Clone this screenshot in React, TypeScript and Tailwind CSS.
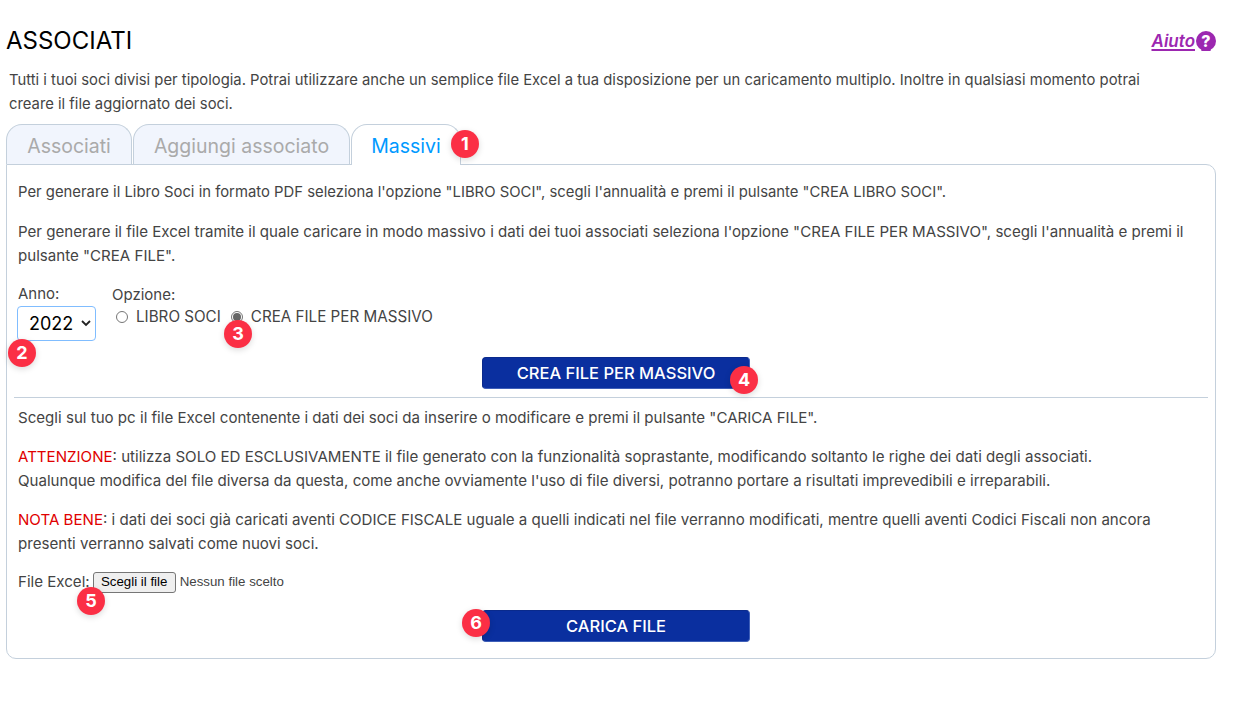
import React from "react";

function Badge({ n, className }: { n: number; className: string }) {
  return (
    <span className={"absolute z-10 flex h-7 w-7 items-center justify-center rounded-full bg-[#fb2f45] text-[18px] font-bold leading-none text-white shadow-[0_2px_6px_rgba(0,0,0,0.15)] " + className}>
      {n}
    </span>
  );
}

export default function App() {
  return (
    <div className="relative min-h-[703px] bg-white pl-[6px] pr-[27px] pt-[26px] font-['Inter',sans-serif] text-[15.1px] leading-[24px] text-[#444444]">
      <div className="flex items-start justify-between">
        <h1 className="mt-[1px] h-[27px] text-[24px] leading-[28px] text-black">ASSOCIATI</h1>
        <a className="mt-[3px] flex items-center text-[17px] font-semibold italic leading-[22px] text-[#9c27b0] underline decoration-2 underline-offset-2">
          <span className="pt-[1px]">Aiuto</span>
          <span className="ml-[1px] flex h-[20px] w-[20px] items-center justify-center rounded-full bg-[#9c27b0] text-[16px] font-extrabold not-italic text-white no-underline">?</span>
        </a>
      </div>
      <p className="mt-[14px] pl-[3px] pr-[40px] text-[14.82px]">
        Tutti i tuoi soci divisi per tipologia. Potrai utilizzare anche un semplice file Excel a tua disposizione per un caricamento multiplo. Inoltre in qualsiasi momento potrai creare il file aggiornato dei soci.
      </p>
      <div className="relative mt-[8px] flex h-[40px] items-end">
        <div className="mr-[1px] flex h-[40px] w-[126px] items-center justify-center rounded-t-[16px] border border-b-0 border-[#c4d0dc] bg-[#f1f5fd] pt-[2px] text-[19.5px] text-[#aaaaaa]">Associati</div>
        <div className="mr-[1px] flex h-[40px] w-[217px] items-center justify-center rounded-t-[16px] border border-b-0 border-[#c4d0dc] bg-[#f1f5fd] pt-[2px] text-[19.5px] text-[#aaaaaa]">Aggiungi associato</div>
        <div className="relative z-[1] -mb-px flex h-[41px] w-[110px] items-center justify-center rounded-t-[16px] border border-b-0 border-[#c4d0dc] bg-white pt-[2px] text-[19.5px] text-[#0099ff]">Massivi</div>
        <Badge n={1} className="left-[445px] top-[6px]" />
      </div>
      <div className="relative h-[495px] rounded-b-[10px] rounded-tr-[10px] border border-[#c4d0dc] px-[11px] pt-[15px]">
        <p className="text-[14.85px]">Per generare il Libro Soci in formato PDF seleziona l'opzione "LIBRO SOCI", scegli l'annualità e premi il pulsante "CREA LIBRO SOCI".</p>
        <p className="mt-[16px]">Per generare il file Excel tramite il quale caricare in modo massivo i dati dei tuoi associati seleziona l'opzione "CREA FILE PER MASSIVO", scegli l'annualità e premi il pulsante "CREA FILE".</p>
        <div className="mt-[13px] flex text-[15px]">
          <div className="relative -ml-px">
            <div className="pl-px pt-[2px] leading-[22px]">Anno:</div>
            <div className="mt-[1px] flex h-[35px] w-[79px] items-center rounded-[4px] border border-[#80bdff] pl-[11px] text-[18px] text-black">
              2022
              <svg className="ml-[8px]" width="10" height="7" viewBox="0 0 10 7" fill="none" stroke="#222" strokeWidth="1.8"><path d="M1 1l4 4 4-4" /></svg>
            </div>
            <Badge n={2} className="left-[-9px] top-[58px]" />
          </div>
          <div className="relative ml-[16px] pt-[3px]">
            <div className="leading-[22px]">Opzione:</div>
            <div className="flex items-center text-[15.2px] leading-[22px]">
              <span className="ml-[4px] h-[12px] w-[12px] rounded-full border border-[#767676] bg-white" />
              <span className="ml-[8px]">LIBRO SOCI</span>
              <span className="ml-[10px] flex h-[12px] w-[12px] items-center justify-center rounded-full border border-[#767676] bg-white">
                <span className="h-[8px] w-[8px] rounded-full bg-[#666666]" />
              </span>
              <span className="ml-[8px]">CREA FILE PER MASSIVO</span>
            </div>
            <Badge n={3} className="left-[112px] top-[39px]" />
          </div>
        </div>
        <div className="relative mt-[16px] flex justify-center">
          <div className="relative ml-[10px]">
            <button className="block h-[32px] w-[268px] rounded-[4px] border border-[#0a2a8c] border-b-[#3f5fb8] border-r-[#3f5fb8] bg-[#0a2f9f] text-[16.5px] font-medium text-white">CREA FILE PER MASSIVO</button>
            <Badge n={4} className="left-[248px] top-[9px]" />
          </div>
        </div>
        <hr className="mx-[-4px] mt-[8px] border-0 border-t border-[#c4d0dc]" />
        <p className="mt-[8px]">Scegli sul tuo pc il file Excel contenente i dati dei soci da inserire o modificare e premi il pulsante "CARICA FILE".</p>
        <p className="mt-[15px]"><span className="text-[#e00000]">ATTENZIONE</span>: utilizza SOLO ED ESCLUSIVAMENTE il file generato con la funzionalità soprastante, modificando soltanto le righe dei dati degli associati.<br />Qualunque modifica del file diversa da questa, come anche ovviamente l'uso di file diversi, potranno portare a risultati imprevedibili e irreparabili.</p>
        <p className="mt-[15px]"><span className="text-[#e00000]">NOTA BENE</span>: i dati dei soci già caricati aventi CODICE FISCALE uguale a quelli indicati nel file verranno modificati, mentre quelli aventi Codici Fiscali non ancora presenti verranno salvati come nuovi soci.</p>
        <div className="relative mt-[14px] flex items-center">
          <span>File Excel:</span>
          <span className="ml-[3px] flex h-[21px] w-[83px] items-center justify-center rounded-[3px] border border-[#767676] bg-[#efefef] font-['Liberation_Sans',sans-serif] text-[13.3px] text-black">Scegli il file</span>
          <span className="ml-[4px] font-['Liberation_Sans',sans-serif] text-[13.3px]">Nessun file scelto</span>
          <Badge n={5} className="left-[59px] top-[17px]" />
        </div>
        <div className="mt-[16px] flex justify-center">
          <div className="relative ml-[10px]">
            <button className="block h-[32px] w-[268px] rounded-[4px] border border-[#0a2a8c] border-b-[#3f5fb8] border-r-[#3f5fb8] bg-[#0a2f9f] text-[16.5px] font-medium text-white">CARICA FILE</button>
            <Badge n={6} className="left-[-20px] top-[-1px]" />
          </div>
        </div>
      </div>
    </div>
  );
}
